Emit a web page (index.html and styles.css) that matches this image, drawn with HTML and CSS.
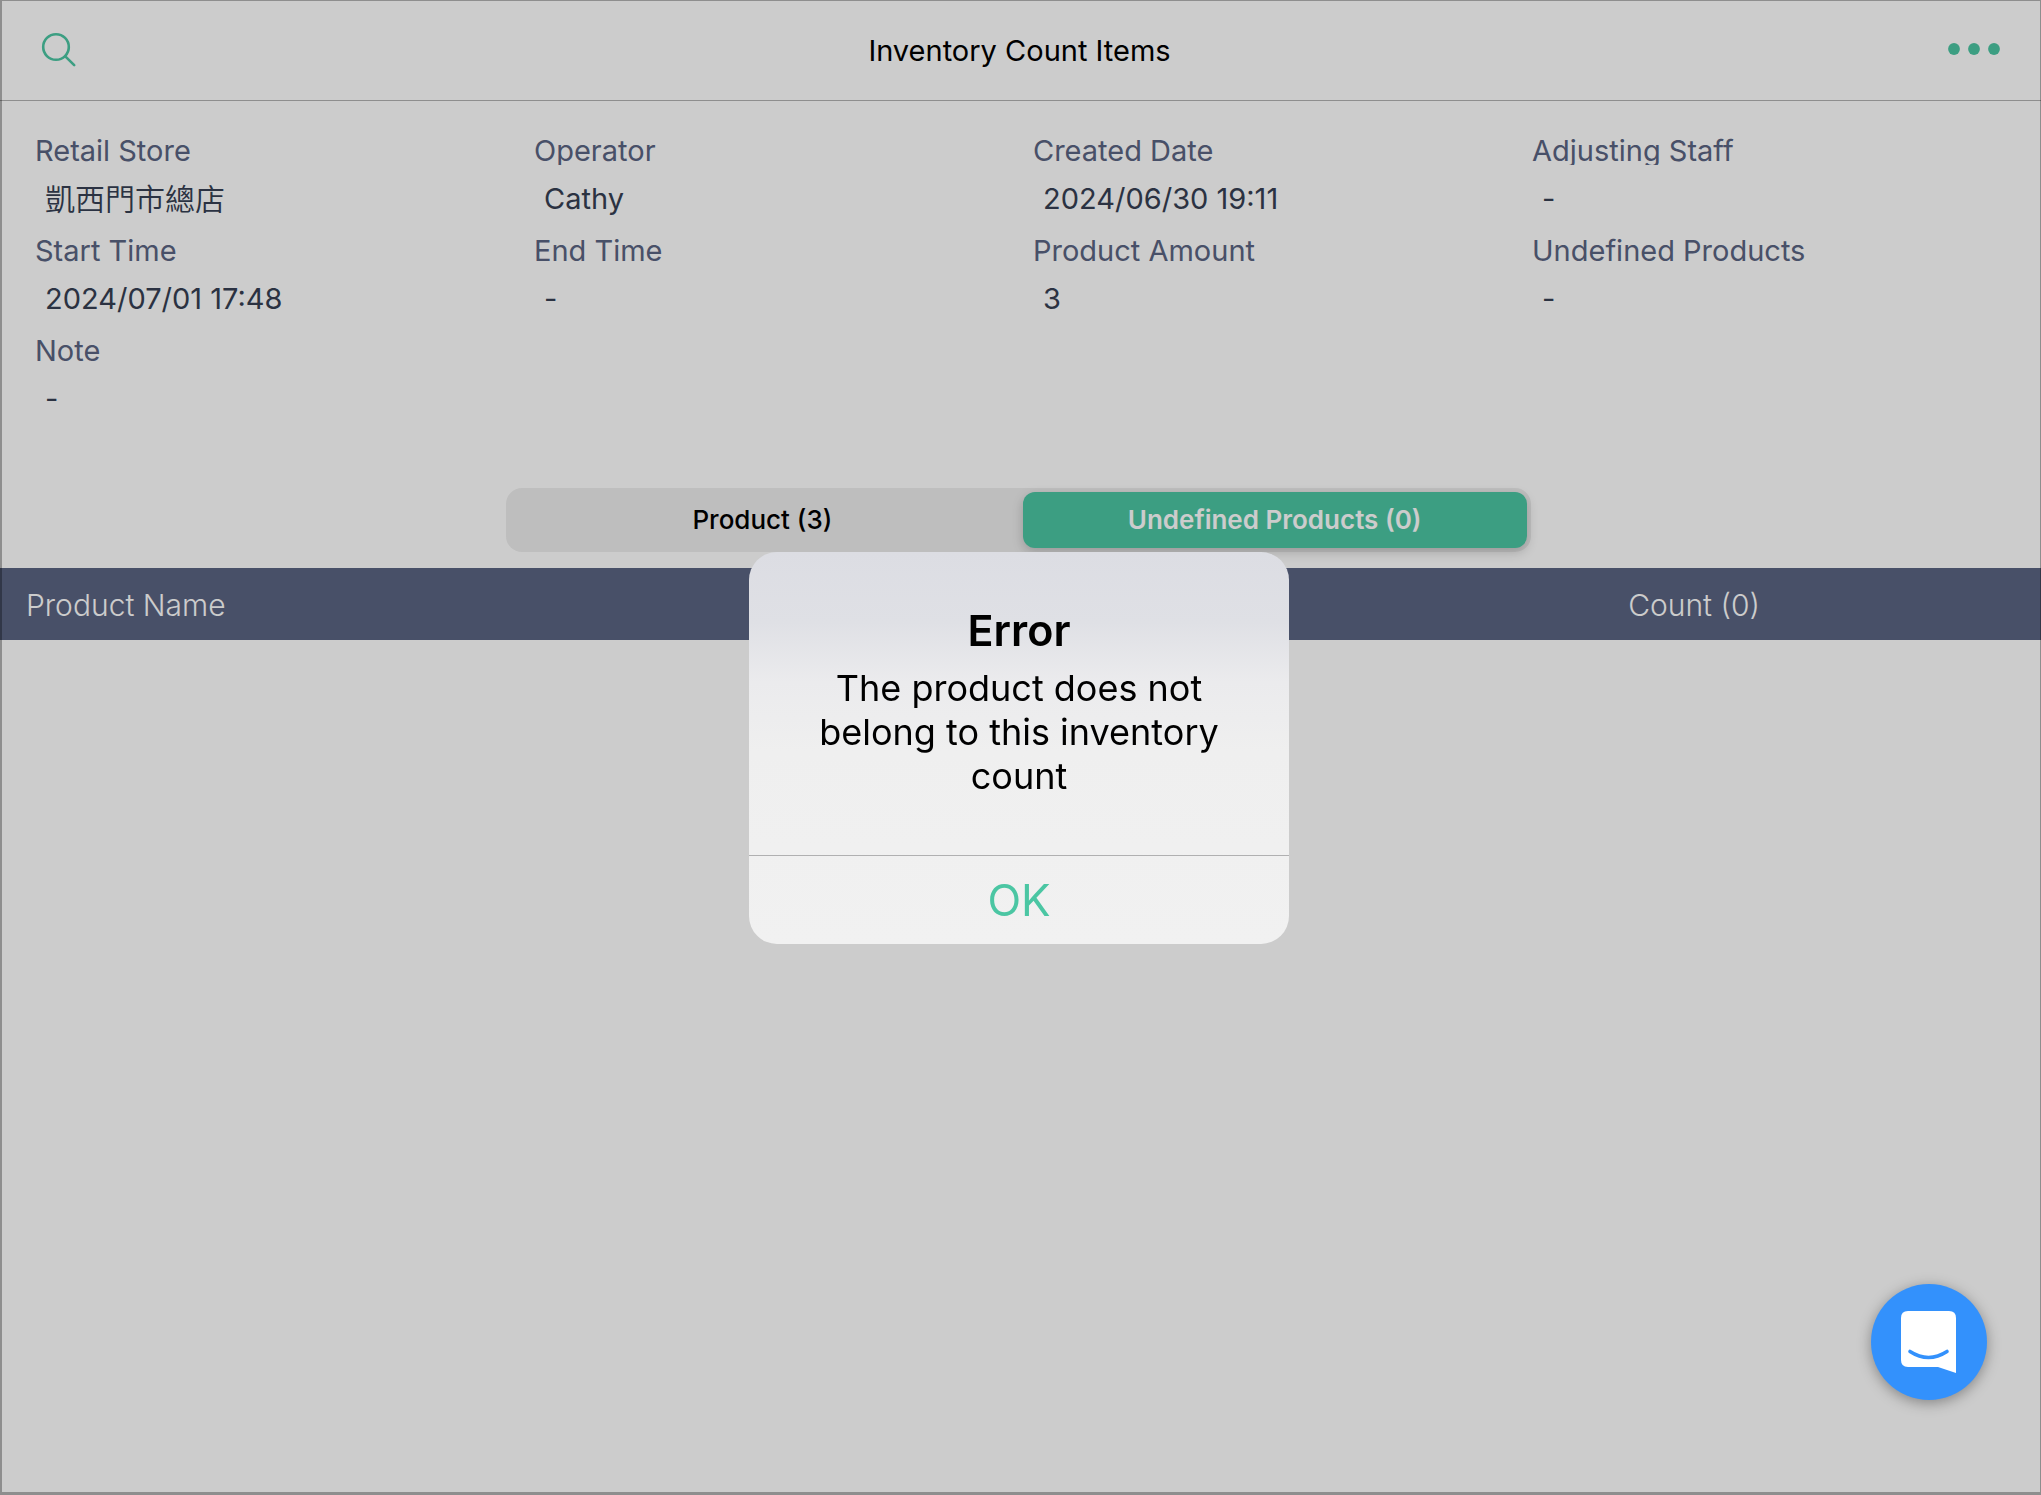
FILE: index.html
```html
<!DOCTYPE html>
<html lang="en">
<head>
    <meta charset="UTF-8">
    <meta name="viewport" content="width=device-width, initial-scale=1.0">
    <title>Inventory Count Items</title>
    <link rel="stylesheet" href="styles.css">
</head>
<body>
    <div class="page">
        <header class="topbar">
            <button class="icon-btn" type="button" aria-label="Search">
                <svg width="40" height="40" viewBox="0 0 40 40" fill="none" stroke="#4bc6a3" stroke-width="2.6" stroke-linecap="round">
                    <circle cx="17" cy="17" r="12.8"/>
                    <path d="M26.3 26.3L35.2 35.2"/>
                </svg>
            </button>
            <h1>Inventory Count Items</h1>
            <button class="icon-btn" type="button" aria-label="More">
                <svg width="52" height="40" viewBox="0 0 52 40" fill="#4bc6a3">
                    <circle cx="6" cy="19" r="5.9"/>
                    <circle cx="26" cy="19" r="5.9"/>
                    <circle cx="46" cy="19" r="5.9"/>
                </svg>
            </button>
        </header>

        <main>
            <dl class="details">
                <div class="field">
                    <dt>Retail Store</dt>
                    <dd class="store-name" lang="zh-Hant">凱西門市總店</dd>
                </div>
                <div class="field">
                    <dt>Operator</dt>
                    <dd>Cathy</dd>
                </div>
                <div class="field">
                    <dt>Created Date</dt>
                    <dd>2024/06/30 19:11</dd>
                </div>
                <div class="field">
                    <dt>Adjusting Staff</dt>
                    <dd>-</dd>
                </div>
                <div class="field">
                    <dt>Start Time</dt>
                    <dd>2024/07/01 17:48</dd>
                </div>
                <div class="field">
                    <dt>End Time</dt>
                    <dd>-</dd>
                </div>
                <div class="field">
                    <dt>Product Amount</dt>
                    <dd>3</dd>
                </div>
                <div class="field">
                    <dt>Undefined Products</dt>
                    <dd>-</dd>
                </div>
                <div class="field">
                    <dt>Note</dt>
                    <dd>-</dd>
                </div>
            </dl>

            <div class="tabs" role="tablist">
                <button class="tab" type="button" role="tab" aria-selected="false">Product (3)</button>
                <button class="tab active" type="button" role="tab" aria-selected="true">Undefined Products (0)</button>
            </div>

            <table class="items">
                <thead>
                    <tr>
                        <th class="col-name" scope="col">Product Name</th>
                        <th class="col-count" scope="col">Count (0)</th>
                    </tr>
                </thead>
                <tbody></tbody>
            </table>
        </main>
    </div>

    <div class="overlay">
        <div class="alert" role="alertdialog" aria-modal="true" aria-labelledby="alert-title" aria-describedby="alert-text">
            <div class="alert-body">
                <h2 id="alert-title">Error</h2>
                <p id="alert-text">The product does not belong to this inventory count</p>
            </div>
            <button class="alert-ok" type="button">OK</button>
        </div>
    </div>

    <button class="chat" type="button" aria-label="Open chat">
        <svg width="56" height="62" viewBox="0 0 56 62">
            <path fill="#fff" d="M7 0H48Q55 0 55 7V62L37 56H7Q0 56 0 49V7Q0 0 7 0Z"/>
            <path fill="none" stroke="#3391fc" stroke-width="3.6" stroke-linecap="round" d="M9 40.5Q27.500 52.500 46 40.5"/>
        </svg>
    </button>
</body>
</html>
```

FILE: styles.css
```css
* {
    padding: 0;
    margin: 0;
    box-sizing: border-box;
}
body {
    background-color: #fff;
    font-family: Inter, "Noto Sans CJK TC", sans-serif;
    font-size: 29px;
    color: #363f53;
}
button {
    font-family: inherit;
    background-color: transparent;
    border: none;
    cursor: pointer;
}
svg {
    display: block;
}
.page {
    min-height: 100vh;
}
/* thin frame drawn over everything on the page */
.page::after {
    content: "";
    position: absolute;
    inset: 0;
    border: solid rgba(0, 0, 0, 0.3);
    border-width: 1px 1px 3px 2px;
    pointer-events: none;
}
.topbar {
    height: 101px;
    padding: 0 41px 0 39px;
    display: flex;
    justify-content: space-between;
    align-items: center;
    border-bottom: 1px solid rgba(0, 0, 0, 0.3);
}
.topbar h1 {
    font-size: 29px;
    font-weight: 400;
    color: #000;
}
.icon-btn {
    width: 52px;
}

.details {
    padding: 30px 10px 0 35px;
    display: grid;
    grid-template-columns: repeat(4, 1fr);
}
.field {
    height: 100px;
}
.field dt {
    height: 34px;
    line-height: 40px;
    color: #5a6482;
    overflow: hidden;
}
.field dd {
    padding: 14px 0 0 10px;
    line-height: 40px;
}
.field .store-name {
    font-size: 30px;
    font-weight: 350;
}

.tabs {
    height: 64px;
    margin: 57px 25% 16px calc(25% - 4px);
    padding: 4px;
    display: flex;
    gap: 8px;
    background-color: #eee;
    border-radius: 16px;
}
.tab {
    flex: 1;
    padding-bottom: 2px;
    font-size: 26px;
    font-weight: 500;
    border-radius: 12px;
    color: #000;
}
.tab.active {
    font-weight: 600;
    color: #fff;
    background-color: #4bc6a3;
    box-shadow: 0 4px 12px rgba(0, 0, 0, 0.2);
}

.items {
    width: 100%;
    table-layout: fixed;
    border-collapse: collapse;
}
.items th {
    height: 72px;
    padding-top: 2px;
    font-size: 30px;
    font-weight: 350;
    color: #fff;
    background-color: #5a6482;
}
.items .col-name {
    padding-left: 26px;
    text-align: left;
}
.items .col-count {
    width: 34%;
}

.overlay {
    position: fixed;
    inset: 0;
    padding-right: 3px;
    display: flex;
    justify-content: center;
    align-items: center;
    background-color: rgba(0, 0, 0, 0.2);
}
.alert {
    width: 540px;
    border-radius: 28px;
    overflow: hidden;
    color: #000;
    text-align: center;
    background: linear-gradient(#dcdde3 0, #dfe0e5 70px, #ebebed 130px, #efefef 200px, #f1f1f1 100%);
}
.alert-body {
    padding: 51px 60px 57px;
}
.alert h2 {
    font-size: 43px;
    font-weight: 600;
    line-height: 54px;
    margin-bottom: 9px;
}
.alert p {
    font-size: 36px;
    line-height: 44px;
}
.alert-ok {
    width: 100%;
    height: 89px;
    font-size: 44px;
    color: #4bc6a3;
    border-top: 1px solid #b0b0b1;
}

.chat {
    position: fixed;
    right: 54px;
    bottom: 95px;
    width: 116px;
    height: 116px;
    display: flex;
    justify-content: center;
    align-items: center;
    border-radius: 50%;
    background-color: #3391fc;
    box-shadow: 0 3px 14px rgba(0, 0, 0, 0.35);
}
```
